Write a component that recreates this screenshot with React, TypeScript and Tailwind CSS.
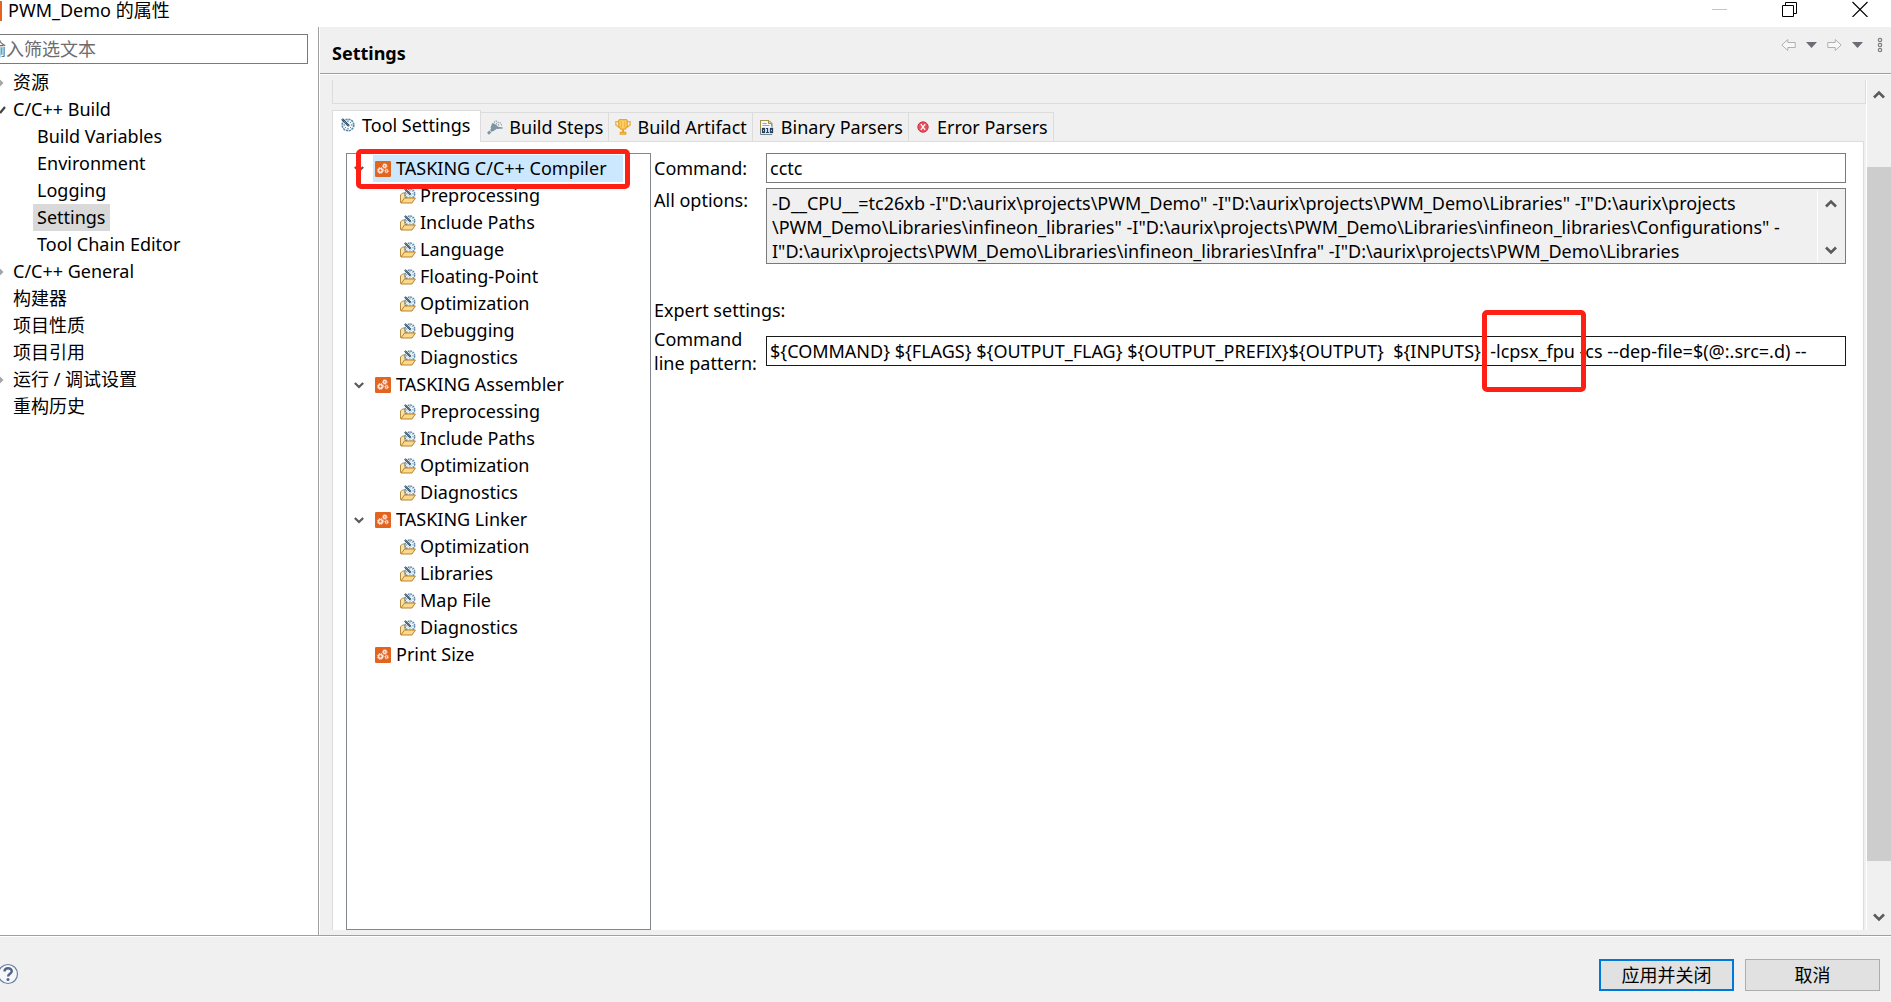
import { useState } from 'react';
import type { ReactNode } from 'react';
import { clsx } from 'clsx';

type NavItem = { label: string; child?: boolean; arrow?: 'open' | 'closed' };

const NAV: NavItem[] = [
  { label: '资源', arrow: 'closed' },
  { label: 'C/C++ Build', arrow: 'open' },
  { label: 'Build Variables', child: true },
  { label: 'Environment', child: true },
  { label: 'Logging', child: true },
  { label: 'Settings', child: true },
  { label: 'Tool Chain Editor', child: true },
  { label: 'C/C++ General', arrow: 'closed' },
  { label: '构建器' },
  { label: '项目性质' },
  { label: '项目引用' },
  { label: '运行 / 调试设置', arrow: 'closed' },
  { label: '重构历史' },
];

const TOOLS = [
  {
    label: 'TASKING C/C++ Compiler',
    pages: [
      'Preprocessing',
      'Include Paths',
      'Language',
      'Floating-Point',
      'Optimization',
      'Debugging',
      'Diagnostics',
    ],
  },
  { label: 'TASKING Assembler', pages: ['Preprocessing', 'Include Paths', 'Optimization', 'Diagnostics'] },
  { label: 'TASKING Linker', pages: ['Optimization', 'Libraries', 'Map File', 'Diagnostics'] },
  { label: 'Print Size', pages: [] },
];

const ALL_OPTIONS = [
  '-D__CPU__=tc26xb -I"D:\\aurix\\projects\\PWM_Demo" -I"D:\\aurix\\projects\\PWM_Demo\\Libraries" -I"D:\\aurix\\projects',
  '\\PWM_Demo\\Libraries\\infineon_libraries" -I"D:\\aurix\\projects\\PWM_Demo\\Libraries\\infineon_libraries\\Configurations" -',
  'I"D:\\aurix\\projects\\PWM_Demo\\Libraries\\infineon_libraries\\Infra" -I"D:\\aurix\\projects\\PWM_Demo\\Libraries',
].join('\n');

const LINE_PATTERN =
  '${COMMAND} ${FLAGS} ${OUTPUT_FLAG} ${OUTPUT_PREFIX}${OUTPUT}  ${INPUTS}  -lcpsx_fpu -cs --dep-file=$(@:.src=.d) --';

function Dial() {
  return (
    <g>
      <circle cx="7" cy="7" r="5.8" fill="#f4f9fd" stroke="#5b87a8" strokeWidth="1.6" strokeDasharray="2.2 .8" />
      <path d="M7 2.5v1.5M7 10v1.5M2.5 7H4M10 7h1.5M10 4l-.8.8M4 10l.8-.8M10 10l-.8-.8" stroke="#2f6f9f" />
      <path d="M1 1l7 7" stroke="#2d4a5e" strokeWidth="2.4" />
      <path d="M1.5 1.5l6 6" stroke="#c7d3da" strokeWidth=".9" strokeDasharray="1 1" />
    </g>
  );
}

function DialIcon() {
  return (
    <svg width="14" height="14" viewBox="0 0 14 14" fill="none" aria-hidden>
      <Dial />
    </svg>
  );
}

function HammerIcon() {
  return (
    <svg width="16" height="15" viewBox="0 0 16 15" fill="none" aria-hidden>
      <path d="M1 13.800L6.500 8.500" stroke="#7f95a3" strokeWidth="2.800" strokeDasharray="3.200 .8" />
      <path d="M5.500 3.500l3 1.200 2.500 2.500 4.500.8-6 .6-3 2-2.500-2.600z" fill="#7f95a3" stroke="#738a99" strokeWidth=".8" />
      <path d="M7 2.500l2-1.500 2.500 1.500 2 .5 1.500 3" stroke="#7f95a3" strokeWidth="1.200" strokeDasharray="1.200 1" />
      <path d="M9 3.500l3.500 2" stroke="#7f95a3" strokeWidth="1.200" strokeDasharray="1.200 1" />
    </svg>
  );
}

function TrophyIcon() {
  return (
    <svg width="16" height="16" viewBox="0 0 15 15" fill="none" aria-hidden>
      <path d="M3.500 2.500H.8v3L3.800 8M11.500 2.500h2.700v3L11.200 8" stroke="#eeb13c" strokeWidth="1.300" />
      <path d="M3.500 1.500l1-.9h6l1 .9V7L9.500 9.500h-4L3.500 7z" fill="#fbcf63" stroke="#eaa52e" strokeWidth="1.200" />
      <path d="M6 2v6M9 2v6" stroke="#f0b544" />
      <path d="M7.500 9.500v3" stroke="#eaa52e" strokeWidth="2" />
      <path d="M5 12.500h5v1.700H5z" fill="#fbcf63" stroke="#eaa52e" strokeWidth="1.200" />
    </svg>
  );
}

function BinaryIcon() {
  return (
    <svg width="14" height="15" viewBox="0 0 14 15" fill="none" aria-hidden>
      <path d="M.5 14.500h11.500V3.500l-3-3H.5z" fill="#f7fafc" stroke="#76828c" />
      <path d="M.5 9V.5h8l3 3V6" stroke="#a98f4c" />
      <path d="M8.500.5v3h3" fill="#ead9a4" stroke="#a98f4c" />
      <path d="M2.500 3.500h4M2.500 5.500h7" stroke="#91a9c0" />
      <path d="M1.500 7.500h12v6.500h-12z" fill="#e8eff5" />
      <rect x="2.500" y="8.500" width="2" height="4" stroke="#25405c" strokeWidth="1.200" />
      <path d="M6 8.500h1.500V13M6 12.500h3" stroke="#25405c" strokeWidth="1.200" />
      <rect x="10.500" y="8.500" width="2" height="4" stroke="#25405c" strokeWidth="1.200" />
    </svg>
  );
}

function ErrorIcon() {
  return (
    <svg width="12" height="12" viewBox="0 0 12 12" fill="none" aria-hidden>
      <circle cx="6" cy="6" r="5.200" fill="#e8505f" stroke="#cf3547" />
      <path d="M3.800 3.200l4.400 5.600M8.200 3.200L3.800 8.800" stroke="#fff" strokeWidth="1.300" />
    </svg>
  );
}

function ToolIcon() {
  return (
    <svg width="16" height="16" viewBox="0 0 16 16" fill="none" className="shrink-0" aria-hidden>
      <rect width="16" height="16" rx="1.200" fill="#e2641f" />
      <circle cx="5.400" cy="9.400" r="1.900" stroke="#fbe3da" strokeWidth="1.700" />
      <circle cx="5.400" cy="9.400" r="3" stroke="#fbe3da" strokeDasharray="1.200 1.200" />
      <circle cx="9.800" cy="5" r="1.400" stroke="#fbe3da" strokeWidth="1.500" />
      <circle cx="9.800" cy="5" r="2.300" stroke="#fbe3da" strokeWidth=".9" strokeDasharray="1 .9" />
      <circle cx="11.600" cy="10" r="1.200" stroke="#fbe3da" strokeWidth="1.100" />
      <circle cx="11.600" cy="10" r="2" stroke="#fbe3da" strokeWidth=".7" strokeDasharray="1 .9" />
    </svg>
  );
}

function FolderIcon() {
  return (
    <svg width="16" height="16" viewBox="0 0 16 16" fill="none" className="shrink-0" aria-hidden>
      <path d="M.5 14.500V7l2-2h2.500v4.500h8V13z" fill="#f8e3a8" stroke="#b78b3c" />
      <g transform="translate(4 0) scale(.84)">
        <Dial />
      </g>
      <path d="M1 15l3.500-5h10.900L12 15z" fill="#fbd989" stroke="#b9822f" />
    </svg>
  );
}

function Chevron({ dir, size = 12 }: { dir: 'up' | 'down'; size?: number }) {
  return (
    <svg width={size} height={size} viewBox="0 0 12 12" fill="none" aria-hidden>
      <path d={dir === 'up' ? 'M1 8.500l5-5 5 5' : 'M1 3.500l5 5 5-5'} stroke="#5a5a5a" strokeWidth="2.600" />
    </svg>
  );
}

function NavArrow({ open }: { open: boolean }) {
  return (
    <svg width="6" height="12" viewBox="0 0 6 12" fill="none" className="shrink-0" aria-hidden>
      {open ? <path d="M0 9l5-6" stroke="#404040" strokeWidth="2.200" /> : <path d="M0 2.500L3.500 6 0 9.500z" fill="#a6a6a6" />}
    </svg>
  );
}

function TitleBar() {
  return (
    <header className="flex h-[27px] shrink-0 items-start justify-between bg-white">
      <div className="flex items-start gap-[6px]">
        <span className="mt-px h-5 w-[2px] bg-[#e2641f]" />
        <h1 className="text-[18px] leading-[20px]">PWM_Demo 的属性</h1>
      </div>
      <div className="flex items-start gap-[54px] pt-px pr-[23px]">
        <button type="button" aria-label="最小化" disabled>
          <svg width="16" height="16" viewBox="0 0 16 16" fill="none">
            <path d="M0 8.500h15" stroke="#c6c6c6" />
          </svg>
        </button>
        <button type="button" aria-label="还原">
          <svg width="16" height="16" viewBox="0 0 16 16" fill="none">
            <path d="M.5 4.500h11v11H.5z" stroke="#000" />
            <path d="M3.500 4V1.500h11v11H12" stroke="#000" />
          </svg>
        </button>
        <button type="button" aria-label="关闭">
          <svg width="16" height="16" viewBox="0 0 16 16" fill="none">
            <path d="M.5 1l15 15M15.500 1l-15 15" stroke="#000" strokeWidth="1.100" />
          </svg>
        </button>
      </div>
    </header>
  );
}

function Sidebar() {
  const [page, setPage] = useState('Settings');

  return (
    <aside className="w-[319px] shrink-0 border-r border-[#a0a0a0] bg-white pt-[7px]">
      <div className="overflow-hidden pr-[10px]">
        <input
          type="text"
          aria-label="筛选"
          placeholder="输入筛选文本"
          className="-ml-[14px] block h-[30px] w-[322px] border border-[#7a7a7a] bg-white pl-px text-[18px] outline-none placeholder:text-[#6d6d6d]"
        />
      </div>
      <ul className="pt-[5px]">
        {NAV.map((item) => (
          <li key={item.label} className="flex h-[27px] items-center">
            <span className={clsx('flex shrink-0', item.child ? 'w-[33px]' : 'w-[9px]')}>
              {item.arrow && <NavArrow open={item.arrow === 'open'} />}
            </span>
            <button
              type="button"
              onClick={() => setPage(item.label)}
              className={clsx('h-[27px] px-[4px] text-[18px] leading-[25px]', page === item.label && 'bg-[#d9d9d9]')}
            >
              {item.label}
            </button>
          </li>
        ))}
      </ul>
    </aside>
  );
}

function PageHeader() {
  return (
    <div className="flex h-[47px] shrink-0 items-start justify-between border-b border-[#a0a0a0] pl-[12px]">
      <h2 className="pt-[13px] text-[18px] leading-[26px] font-bold">Settings</h2>
      <div className="flex items-center gap-[10px] pt-[10px] pr-[8px]">
        <button type="button" aria-label="后退">
          <svg width="15" height="16" viewBox="0 0 15 16" fill="none">
            <path d="M.8 8l6-5.500v3h7.400v5H6.800v3z" fill="#f8f8f8" stroke="#b0b0b0" />
          </svg>
        </button>
        <button type="button" aria-label="后退历史">
          <svg width="11" height="16" viewBox="0 0 11 16">
            <path d="M0 5h11L5.500 11z" fill="#6b6d72" />
          </svg>
        </button>
        <button type="button" aria-label="前进">
          <svg width="15" height="16" viewBox="0 0 15 16" fill="none">
            <path d="M14.200 8l-6-5.500v3H.8v5h7.400v3z" fill="#f8f8f8" stroke="#b0b0b0" />
          </svg>
        </button>
        <button type="button" aria-label="前进历史">
          <svg width="11" height="16" viewBox="0 0 11 16">
            <path d="M0 5h11L5.500 11z" fill="#6b6d72" />
          </svg>
        </button>
        <button type="button" aria-label="菜单" className="pl-[4px]">
          <svg width="6" height="16" viewBox="0 0 6 16" fill="none" stroke="#7d7d7d" strokeWidth="1.200">
            <circle cx="3" cy="3" r="1.700" />
            <circle cx="3" cy="8" r="1.700" />
            <circle cx="3" cy="13" r="1.700" />
          </svg>
        </button>
      </div>
    </div>
  );
}

function Tab({ icon, active, children }: { icon: ReactNode; active?: boolean; children: ReactNode }) {
  return (
    <button
      type="button"
      role="tab"
      aria-selected={!!active}
      className={clsx(
        'flex items-center gap-[6px] border-[#dcdcdc] text-[18px] leading-[24px] whitespace-nowrap',
        active
          ? '-mb-px h-[32px] border border-b-0 bg-white pr-[10px] pb-[4px] pl-[7px]'
          : 'h-[29px] border-t border-r bg-[#f0f0f0] pr-[5px] pl-[6px]',
      )}
    >
      <span className="flex w-4 justify-center">{icon}</span>
      {children}
    </button>
  );
}

function ToolTree() {
  const [selected, setSelected] = useState(TOOLS[0].label);

  return (
    <div className="relative w-[305px] shrink-0 border border-[#828790] bg-white pt-px">
      <ul>
        {TOOLS.map((tool) => (
          <li key={tool.label}>
            <div className="flex h-[27px] items-center pl-[7px]">
              <span className="flex w-[19px] shrink-0">{tool.pages.length > 0 && <Chevron dir="down" size={10} />}</span>
              <button
                type="button"
                onClick={() => setSelected(tool.label)}
                className={clsx(
                  'flex h-[27px] items-center gap-[5px] pr-4 pl-[2px] text-[18px] leading-[25px] whitespace-nowrap',
                  selected === tool.label && 'bg-[#cce8ff]',
                )}
              >
                <ToolIcon />
                {tool.label}
              </button>
            </div>
            <ul>
              {tool.pages.map((page) => (
                <li key={page} className="flex h-[27px] items-center pl-[53px]">
                  <button type="button" className="flex items-center gap-[4px] text-[18px] leading-[25px]">
                    <FolderIcon />
                    {page}
                  </button>
                </li>
              ))}
            </ul>
          </li>
        ))}
      </ul>
      {/* red marker round the compiler node */}
      <div className="pointer-events-none absolute -top-[5px] left-[9px] h-[40px] w-[274px] rounded-[5px] border-[5px] border-[#ff2015]" />
    </div>
  );
}

function ToolForm() {
  return (
    <div className="flex min-w-0 flex-1 flex-col pl-[3px] text-[18px] leading-[24px]">
      <div className="flex items-start">
        <label htmlFor="command" className="w-[112px] shrink-0 pt-[3px]">
          Command:
        </label>
        <input
          id="command"
          type="text"
          defaultValue="cctc"
          className="h-[30px] min-w-0 flex-1 border border-[#7a7a7a] bg-white px-[3px] outline-none"
        />
      </div>
      <div className="flex items-start pt-[5px]">
        <label htmlFor="all-options" className="w-[112px] shrink-0">
          All options:
        </label>
        <div className="flex h-[76px] min-w-0 flex-1 border border-[#7a7a7a] bg-[#f0f0f0] p-px">
          <textarea
            id="all-options"
            readOnly
            wrap="off"
            value={ALL_OPTIONS}
            className="h-full min-w-0 flex-1 resize-none overflow-hidden bg-transparent pt-px pl-[4px] leading-[24px] whitespace-pre outline-none"
          />
          <div className="flex w-[27px] flex-col items-center justify-between border-l border-white pt-[8px] pb-[6px]">
            <button type="button" aria-label="向上滚动">
              <Chevron dir="up" />
            </button>
            <button type="button" aria-label="向下滚动">
              <Chevron dir="down" />
            </button>
          </div>
        </div>
      </div>
      <p className="pt-[34px]">Expert settings:</p>
      <div className="relative flex items-center pt-[5px]">
        <label htmlFor="line-pattern" className="w-[112px] shrink-0">
          Command
          <br />
          line pattern:
        </label>
        <input
          id="line-pattern"
          type="text"
          defaultValue={LINE_PATTERN}
          className="h-[30px] min-w-0 flex-1 border border-[#1a1a1a] bg-white px-[3px] outline-none"
        />
        {/* red marker round the -lcpsx_fpu flag */}
        <div className="pointer-events-none absolute -top-[12px] right-[260px] h-[82px] w-[104px] rounded-[5px] border-[5px] border-[#ff2015]" />
      </div>
    </div>
  );
}

function ScrollBar() {
  return (
    <div className="flex w-[25px] shrink-0 flex-col items-center border-l border-white bg-[#f0f0f0]">
      <button type="button" aria-label="向上滚动" className="flex h-[30px] items-center">
        <Chevron dir="up" />
      </button>
      <div className="flex w-full flex-1 flex-col pt-[57px] pb-[43px]">
        <div className="flex-1 bg-[#cdcdcd]" />
      </div>
      <button type="button" aria-label="向下滚动" className="flex h-[26px] items-center">
        <Chevron dir="down" />
      </button>
    </div>
  );
}

export default function App() {
  return (
    <div className="flex h-screen flex-col overflow-hidden bg-[#f0f0f0] font-['Noto_Sans','Noto_Sans_CJK_SC',sans-serif] text-black">
      <TitleBar />
      <div className="flex min-h-0 flex-1 border-b border-[#a0a0a0]">
        <Sidebar />
        <main className="flex min-w-0 flex-1 flex-col border-l border-white">
          <PageHeader />
          <div className="flex min-h-0 flex-1 border-t border-white pt-[5px] pb-[5px]">
            <div className="flex min-w-0 flex-1 flex-col pl-[12px]">
              <div className="h-[24px] shrink-0 border-x border-b border-[#dcdcdc]" />
              <div className="flex min-h-0 flex-1 flex-col pt-[6px] pr-[2px]">
                <div role="tablist" className="relative flex shrink-0 items-end">
                  <Tab active icon={<DialIcon />}>
                    Tool Settings
                  </Tab>
                  <Tab icon={<HammerIcon />}>Build Steps</Tab>
                  <Tab icon={<TrophyIcon />}>Build Artifact</Tab>
                  <Tab icon={<BinaryIcon />}>Binary Parsers</Tab>
                  <Tab icon={<ErrorIcon />}>Error Parsers</Tab>
                </div>
                <div className="flex min-h-0 flex-1 border-x border-t border-[#dcdcdc] bg-white pt-[11px] pr-[17px] pl-[13px]">
                  <ToolTree />
                  <ToolForm />
                </div>
              </div>
            </div>
            <ScrollBar />
          </div>
        </main>
      </div>
      <footer className="flex h-[66px] shrink-0 items-center justify-between border-t border-white pr-[11px]">
        <button type="button" aria-label="帮助" className="-ml-[3px] pt-[9px]">
          <svg width="22" height="22" viewBox="0 0 22 22" fill="none">
            <circle cx="11" cy="11" r="9.500" fill="#f6f7f9" stroke="#6b7fa0" strokeWidth="1.200" />
            <path d="M7.500 8.500c0-4.500 7.300-4.200 7.300-.3 0 2.600-3.700 2.600-3.700 5.300" stroke="#52648a" strokeWidth="2.400" />
            <circle cx="11" cy="16.500" r="1.500" fill="#52648a" />
          </svg>
        </button>
        <div className="flex gap-[11px] pt-[10px]">
          <button type="button" className="h-[32px] w-[135px] border-2 border-[#0078d7] bg-[#e1e1e1] text-[18px] leading-[26px]">
            应用并关闭
          </button>
          <button type="button" className="h-[32px] w-[135px] border border-[#adadad] bg-[#e1e1e1] text-[18px] leading-[26px]">
            取消
          </button>
        </div>
      </footer>
    </div>
  );
}
